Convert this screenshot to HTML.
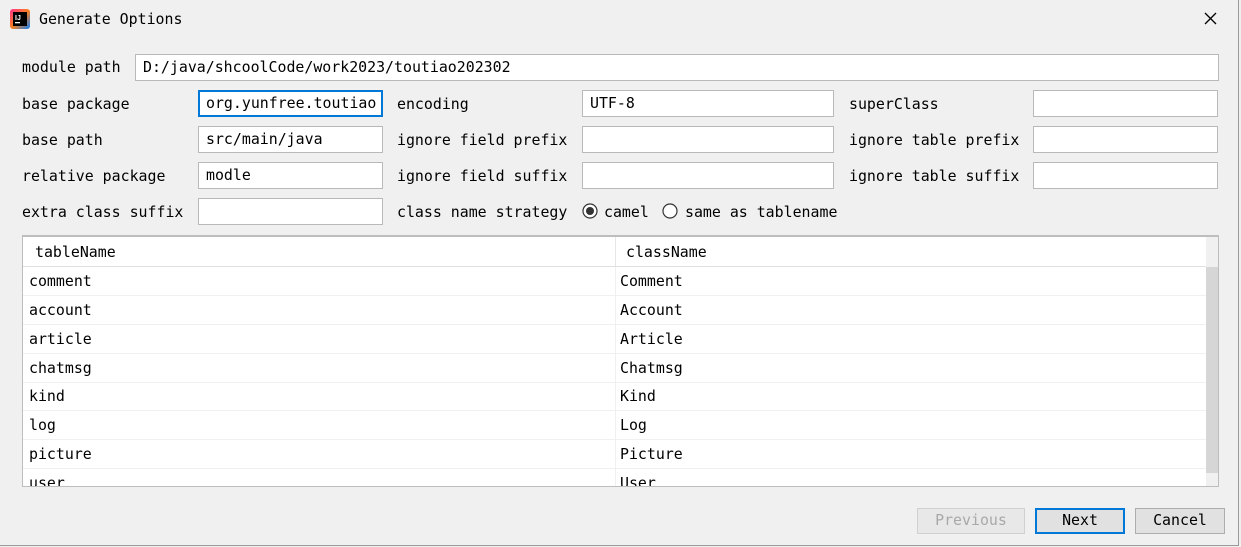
<!DOCTYPE html>
<html><head><style>
*{margin:0;padding:0;box-sizing:border-box}
body{width:1241px;height:547px;background:#f0f0f0;font-family:"DejaVu Sans Mono","Liberation Mono",monospace;font-size:14.9px;color:#000;position:relative;overflow:hidden}
.a{position:absolute;white-space:pre}
.lbl{position:absolute;line-height:20px;white-space:pre}
.in{position:absolute;background:#fff;border:1px solid #b9b9b9;height:27px;line-height:24px;padding-left:7px;white-space:pre;overflow:hidden}
.row{position:absolute;left:23px;width:1183px;height:29px;border-bottom:1px solid #f0f0f0;line-height:28px}
.row span{position:absolute}
.btn{position:absolute;top:508px;height:26px;border:1px solid #adadad;background:#e1e1e1;text-align:center;line-height:23px}
</style></head><body>
<div class="a" style="left:0;top:0;width:1239px;height:546px;border:1px solid #9a9a9a;border-top:none;border-left:none"></div>
<svg class="a" style="left:10px;top:9px" width="20" height="20" viewBox="0 0 20 20"><defs><linearGradient id="g" x1="0" y1="0" x2="1" y2="1"><stop offset="0" stop-color="#ff318c"/><stop offset=".5" stop-color="#fc801d"/><stop offset="1" stop-color="#087cfa"/></linearGradient></defs><rect x="0" y="0" width="20" height="20" rx="3" fill="url(#g)"/><rect x="3" y="3" width="14" height="14" fill="#000"/><text x="5" y="11" fill="#fff" font-size="7" font-family="Liberation Sans" font-weight="bold">IJ</text><rect x="5" y="13" width="5" height="1.3" fill="#fff"/></svg>
<div class="a" style="left:39px;top:9px;line-height:20px">Generate Options</div>
<svg class="a" style="left:1204px;top:12px" width="13" height="13" viewBox="0 0 13 13"><path d="M1 1L12 12M12 1L1 12" stroke="#000" stroke-width="1.3"/></svg>

<div class="lbl" style="left:22px;top:57px">module path</div>
<div class="in" style="left:135px;top:54px;width:1084px">D:/java/shcoolCode/work2023/toutiao202302</div>

<div class="lbl" style="left:22px;top:94px">base package</div>
<div class="in" style="left:198px;top:90px;width:185px;border:2px solid #0078d7;line-height:22px;padding-left:6px">org.yunfree.toutiao</div>
<div class="lbl" style="left:397px;top:94px">encoding</div>
<div class="in" style="left:582px;top:90px;width:252px">UTF-8</div>
<div class="lbl" style="left:849px;top:94px">superClass</div>
<div class="in" style="left:1033px;top:90px;width:185px"></div>

<div class="lbl" style="left:22px;top:130px">base path</div>
<div class="in" style="left:198px;top:126px;width:185px">src/main/java</div>
<div class="lbl" style="left:397px;top:130px">ignore field prefix</div>
<div class="in" style="left:582px;top:126px;width:252px"></div>
<div class="lbl" style="left:849px;top:130px">ignore table prefix</div>
<div class="in" style="left:1033px;top:126px;width:185px"></div>

<div class="lbl" style="left:22px;top:166px">relative package</div>
<div class="in" style="left:198px;top:162px;width:185px">modle</div>
<div class="lbl" style="left:397px;top:166px">ignore field suffix</div>
<div class="in" style="left:582px;top:162px;width:252px"></div>
<div class="lbl" style="left:849px;top:166px">ignore table suffix</div>
<div class="in" style="left:1033px;top:162px;width:185px"></div>

<div class="lbl" style="left:22px;top:202px">extra class suffix</div>
<div class="in" style="left:198px;top:198px;width:185px"></div>
<div class="lbl" style="left:397px;top:202px">class name strategy</div>
<svg class="a" style="left:582px;top:203px" width="16" height="16"><circle cx="8" cy="8" r="7" fill="#fff" stroke="#333" stroke-width="1.2"/><circle cx="8" cy="8" r="4" fill="#333"/></svg>
<div class="lbl" style="left:604px;top:202px">camel</div>
<svg class="a" style="left:662px;top:203px" width="16" height="16"><circle cx="8" cy="8" r="7" fill="#fff" stroke="#333" stroke-width="1.2"/></svg>
<div class="lbl" style="left:685px;top:202px">same as tablename</div>

<div class="a" style="left:22px;top:235px;width:1197px;height:252px;border:1px solid #bdbdbd;border-top:2px solid #bdbdbd;background:#fff;overflow:hidden"></div>
<div class="a" style="left:23px;top:237px;width:1183px;height:30px;border-bottom:1px solid #e0e0e0"></div>
<div class="a" style="left:615px;top:237px;width:1px;height:29px;background:#e6e6e6"></div>
<div class="lbl" style="left:35px;top:242px">tableName</div>
<div class="lbl" style="left:626px;top:242px">className</div>
<div class="a" style="left:1206px;top:237px;width:12px;height:249px;background:#f0f0f0"></div>
<div class="a" style="left:1206px;top:267px;width:12px;height:206px;background:#d6d6d6"></div>
<div class="a" style="left:23px;top:267px;width:1183px;height:219px;overflow:hidden">
<div class="row" style="left:0;top:0"><span style="left:6px">comment</span><span style="left:597px">Comment</span></div>
<div class="row" style="left:0;top:29px"><span style="left:6px">account</span><span style="left:597px">Account</span></div>
<div class="row" style="left:0;top:58px"><span style="left:6px">article</span><span style="left:597px">Article</span></div>
<div class="row" style="left:0;top:87px"><span style="left:6px">chatmsg</span><span style="left:597px">Chatmsg</span></div>
<div class="row" style="left:0;top:115px"><span style="left:6px">kind</span><span style="left:597px">Kind</span></div>
<div class="row" style="left:0;top:144px"><span style="left:6px">log</span><span style="left:597px">Log</span></div>
<div class="row" style="left:0;top:173px"><span style="left:6px">picture</span><span style="left:597px">Picture</span></div>
<div class="row" style="left:0;top:202px"><span style="left:6px">user</span><span style="left:597px">User</span></div>
<div class="a" style="left:592px;top:0;width:1px;height:219px;background:#f0f0f0"></div>
</div>

<div class="btn" style="left:917px;width:108px;color:#a8a8a8;border-color:#d0d0d0;background:#e8e8e8">Previous</div>
<div class="btn" style="left:1035px;width:90px;border:2px solid #0078d7;line-height:21px">Next</div>
<div class="btn" style="left:1135px;width:90px">Cancel</div>
</body></html>
